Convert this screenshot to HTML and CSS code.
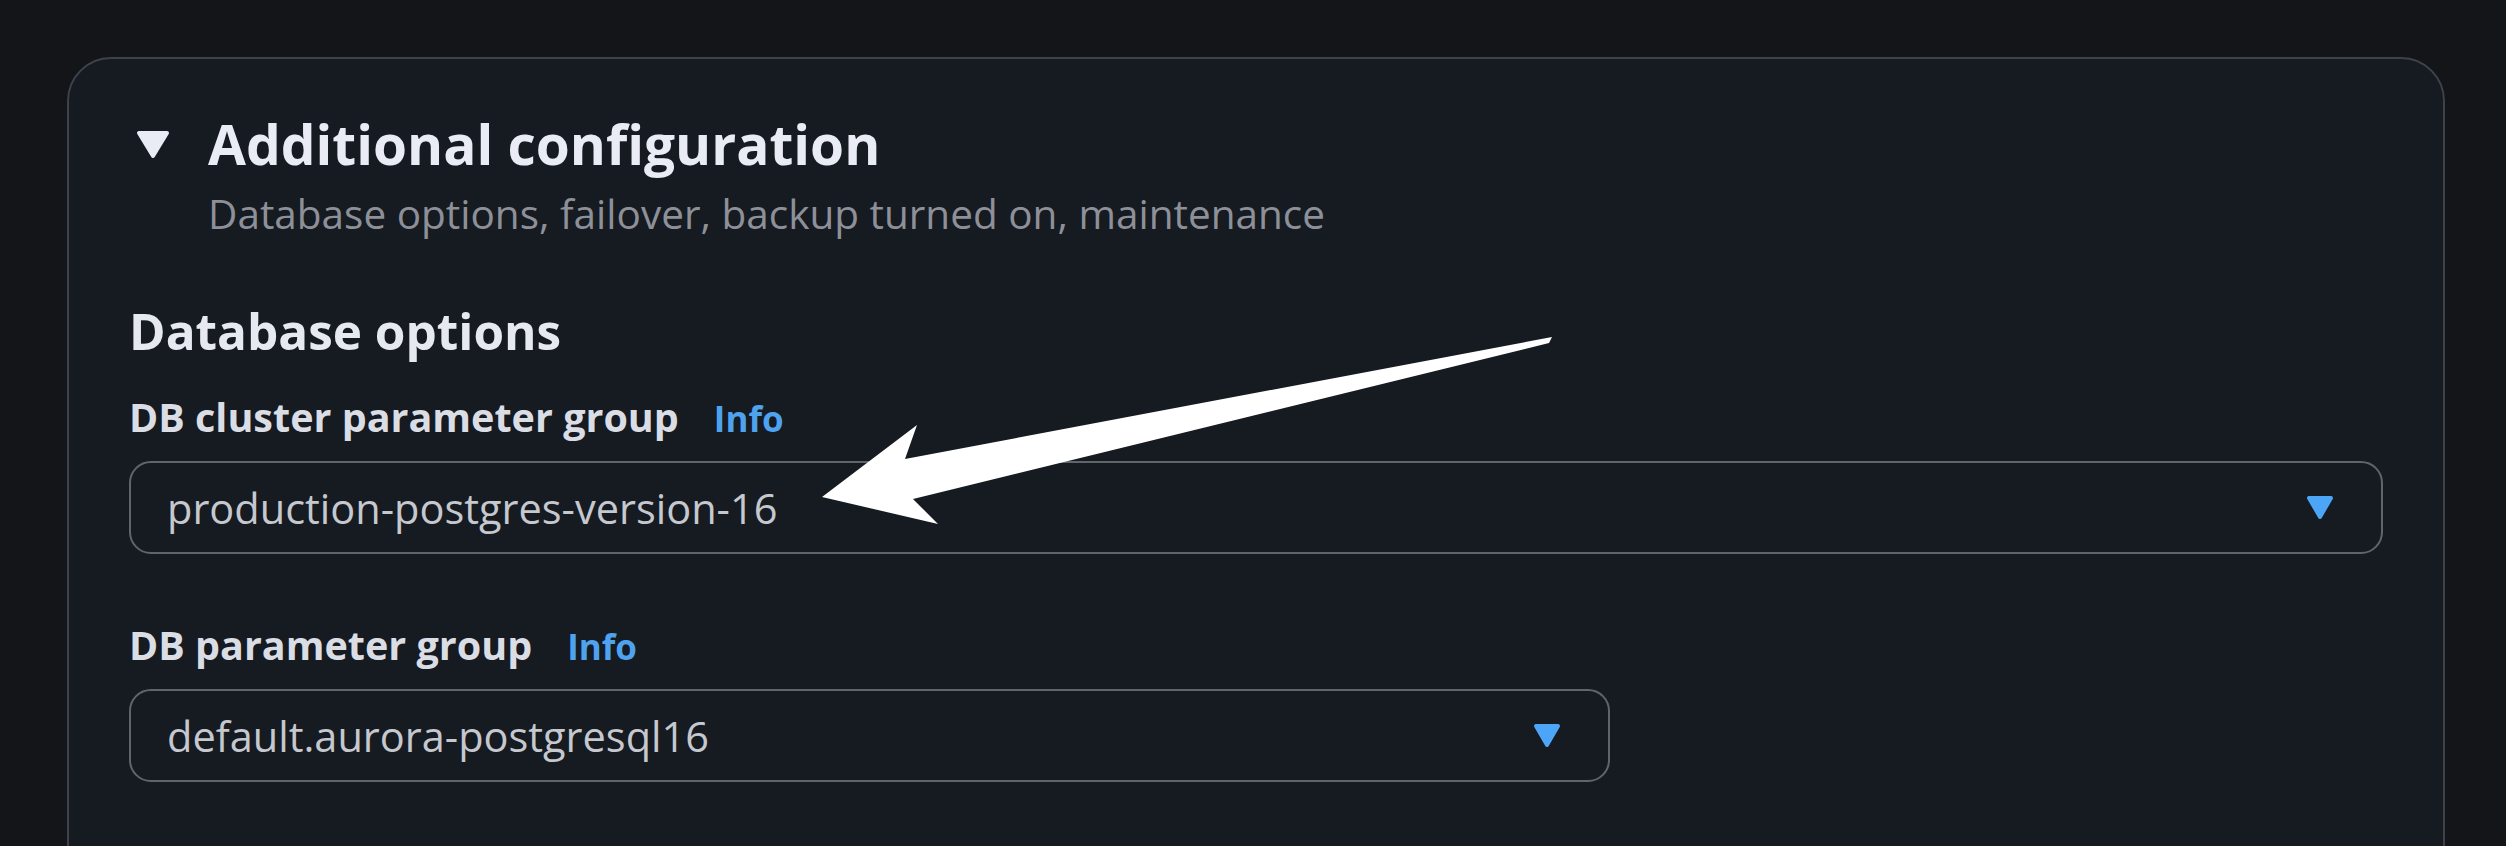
FILE: index.html
```html
<!DOCTYPE html>
<html lang="en">
<head>
    <meta charset="UTF-8">
    <meta name="viewport" content="width=device-width, initial-scale=1.0">
    <title>Additional configuration</title>
    <link rel="stylesheet" href="styles.css">
</head>
<body>
    <div class="page">
        <section class="card">
            <header class="card-header">
                <span class="toggle">
                    <svg width="36" height="29" viewBox="0 0 36 29"><path d="M4 3 H32 L18 26 Z"/></svg>
                </span>
                <div class="card-heading">
                    <h2 class="card-title">Additional configuration</h2>
                    <p class="card-desc">Database options, failover, backup turned on, maintenance</p>
                </div>
            </header>

            <h3 class="section-title">Database options</h3>

            <div class="field field-first">
                <div class="field-label">
                    <span>DB cluster parameter group</span>
                    <a class="info" href="#">Info</a>
                </div>
                <div class="select">
                    <span class="select-value">production-postgres-version-16</span>
                    <svg class="caret" width="30" height="25" viewBox="0 0 30 25"><path d="M4 3 H26 L15 22 Z"/></svg>
                </div>
            </div>

            <div class="field field-second">
                <div class="field-label">
                    <span>DB parameter group</span>
                    <a class="info" href="#">Info</a>
                </div>
                <div class="select select-half">
                    <span class="select-value">default.aurora-postgresql16</span>
                    <svg class="caret" width="30" height="25" viewBox="0 0 30 25"><path d="M4 3 H26 L15 22 Z"/></svg>
                </div>
            </div>
        </section>
    </div>

    <!-- annotation arrow drawn over the form -->
    <svg class="annotation" width="2506" height="846" viewBox="0 0 2506 846">
        <polygon points="822,497 917,425 905,459 1552,337 1549,343 913,499 938,524"/>
    </svg>
</body>
</html>
```

FILE: styles.css
```css
body {
    margin: 0;
    height: 846px;
    overflow: hidden;
    background-color: #131519;
    font-family: "Open Sans", "Noto Sans", sans-serif;
    position: relative;
}
.page {
    padding: 57px 61px 0 67px;
}
.card {
    background-color: #161a21;
    border: 2px solid #3e434b;
    border-radius: 44px;
    padding: 52px 60px 0 60px;
    min-height: 900px;
}
.card-header {
    display: flex;
    align-items: flex-start;
}
.toggle {
    display: flex;
    align-items: center;
    height: 66px;
    margin-left: 6px;
    margin-right: 37px;
}
.toggle svg path {
    fill: #e9ecf4;
    stroke: #e9ecf4;
    stroke-width: 4;
    stroke-linejoin: round;
}
.card-title {
    margin: 0;
    font-size: 55px;
    line-height: 66px;
    font-weight: 700;
    color: #e9ecf4;
}
.card-desc {
    margin: 12px 0 0;
    font-size: 40.5px;
    line-height: 50px;
    color: #8d9098;
}
.section-title {
    margin: 62px 0 0;
    font-size: 49.5px;
    line-height: 60px;
    font-weight: 700;
    color: #e6e9f0;
}
.field-first {
    margin-top: 31px;
}
.field-second {
    margin-top: 66px;
}
.field-label {
    display: flex;
    align-items: baseline;
    gap: 35px;
    font-size: 39.5px;
    line-height: 50px;
    font-weight: 700;
    color: #dadde4;
}
.info {
    font-size: 35px;
    color: #4ea2ee;
    text-decoration: none;
}
.select {
    margin-top: 17px;
    height: 93px;
    box-sizing: border-box;
    display: flex;
    align-items: center;
    justify-content: space-between;
    padding: 0 46px 0 36px;
    border: 2px solid #60646b;
    border-radius: 22px;
}
.select-half {
    width: 1481px;
}
.select-value {
    font-size: 41.5px;
    line-height: 50px;
    color: #c5c8ce;
}
.caret path {
    fill: #4ca5f7;
    stroke: #4ca5f7;
    stroke-width: 4;
    stroke-linejoin: round;
}
.annotation {
    position: absolute;
    top: 0;
    left: 0;
    pointer-events: none;
}
.annotation polygon {
    fill: #ffffff;
}
```
